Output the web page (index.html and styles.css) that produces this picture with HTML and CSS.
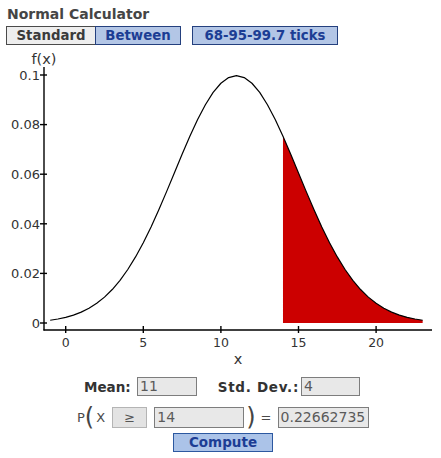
FILE: index.html
```html
<!DOCTYPE html>
<html>
<head>
<meta charset="utf-8">
<link rel="stylesheet" href="styles.css">
</head>
<body>
<div class="app">
  <div class="title">Normal Calculator</div>
  <div class="modes">
    <button class="mode mode-std">Standard</button><button class="mode mode-sel mode-between">Between</button><button class="mode mode-sel mode-ticks">68-95-99.7 ticks</button>
  </div>
  <svg class="chart" width="441" height="323" viewBox="0 45 441 323" xmlns="http://www.w3.org/2000/svg">
    <polygon class="area" points="282.98,323 282.98,136.29 290.74,154.31 298.50,172.97 306.26,191.63 314.02,209.75 321.78,226.89 329.54,242.70 337.30,256.94 345.06,269.51 352.82,280.35 360.58,289.52 368.34,297.13 376.10,303.32 383.86,308.26 391.62,312.13 399.38,315.11 407.14,317.36 414.90,319.03 422.66,320.25 422.66,323"/>
    <polyline class="curve" points="50.18,320.25 57.94,319.03 65.70,317.36 73.46,315.11 81.22,312.13 88.98,308.26 96.74,303.32 104.50,297.13 112.26,289.52 120.02,280.35 127.78,269.51 135.54,256.94 143.30,242.70 151.06,226.89 158.82,209.75 166.58,191.63 174.34,172.97 182.10,154.31 189.86,136.29 197.62,119.53 205.38,104.71 213.14,92.44 220.90,83.26 228.66,77.57 236.42,75.65 244.18,77.57 251.94,83.26 259.70,92.44 267.46,104.71 275.22,119.53 282.98,136.29 290.74,154.31 298.50,172.97 306.26,191.63 314.02,209.75 321.78,226.89 329.54,242.70 337.30,256.94 345.06,269.51 352.82,280.35 360.58,289.52 368.34,297.13 376.10,303.32 383.86,308.26 391.62,312.13 399.38,315.11 407.14,317.36 414.90,319.03 422.66,320.25"/>
    <g class="axis">
      <line x1="44" y1="67" x2="44" y2="330.5"/>
      <line x1="43.5" y1="330" x2="432" y2="330"/>
      <line x1="40" y1="323" x2="47" y2="323"/>
      <line x1="40" y1="273.4" x2="47" y2="273.4"/>
      <line x1="40" y1="223.8" x2="47" y2="223.8"/>
      <line x1="40" y1="174.2" x2="47" y2="174.2"/>
      <line x1="40" y1="124.6" x2="47" y2="124.6"/>
      <line x1="40" y1="75" x2="47" y2="75"/>
      <line x1="65.7" y1="326" x2="65.7" y2="333"/>
      <line x1="143.3" y1="326" x2="143.3" y2="333"/>
      <line x1="220.9" y1="326" x2="220.9" y2="333"/>
      <line x1="298.5" y1="326" x2="298.5" y2="333"/>
      <line x1="376.1" y1="326" x2="376.1" y2="333"/>
    </g>
    <g class="ylabels">
      <text x="40" y="327.8">0</text>
      <text x="40" y="278.2">0.02</text>
      <text x="40" y="228.6">0.04</text>
      <text x="40" y="179">0.06</text>
      <text x="40" y="129.4">0.08</text>
      <text x="40" y="79.8">0.1</text>
    </g>
    <g class="xlabels">
      <text x="65.7" y="347">0</text>
      <text x="143.3" y="347">5</text>
      <text x="220.9" y="347">10</text>
      <text x="298.5" y="347">15</text>
      <text x="376.1" y="347">20</text>
    </g>
    <text class="axis-title" x="238" y="364">x</text>
    <text class="axis-title" x="44" y="64">f(x)</text>
  </svg>
  <div class="row row-params">
    <span class="lbl lbl-mean">Mean:</span><span class="field field-mean">11</span><span class="lbl lbl-sd">Std. Dev.:</span><span class="field field-sd">4</span>
  </div>
  <div class="row row-prob">
    <span class="pt">P</span><span class="paren">(</span><span class="pt px">X</span><button class="op">≥</button><span class="field field-x">14</span><span class="paren paren-r">)</span><span class="pt eq">=</span><span class="field field-res">0.22662735</span>
  </div>
  <div class="row row-compute">
    <button class="compute">Compute</button>
  </div>
</div>
</body>
</html>
```
FILE: styles.css
```css
html, body {
  margin: 0;
  padding: 0;
  background: #ffffff;
}
body {
  font-family: "DejaVu Sans", Verdana, sans-serif;
  color: #333333;
}
.app {
  width: 441px;
  height: 458px;
  overflow: hidden;
}
.title {
  margin: 6px 0 0 7px;
  font-size: 14px;
  line-height: 16px;
  font-weight: bold;
  color: #454545;
}
.modes {
  display: flex;
  margin: 4px 0 0 6px;
  height: 19px;
}
.mode {
  box-sizing: border-box;
  height: 19px;
  margin: 0;
  padding: 0;
  font-family: "DejaVu Sans", Verdana, sans-serif;
  font-size: 13.3px;
  line-height: 17px;
  font-weight: bold;
  text-align: center;
  border: 1px solid #4a4a4a;
  border-radius: 0;
}
.mode-std {
  width: 89px;
  background: #eeeeee;
  color: #3a3a3a;
  border-right: none;
}
.mode-sel {
  background: #b3c6e6;
  color: #1c3d94;
  border-color: #24407e;
}
.mode-between {
  width: 86px;
}
.mode-ticks {
  width: 146px;
  margin-left: 11px;
}
.chart {
  display: block;
}
.area {
  fill: #cc0000;
  stroke: none;
}
.curve {
  fill: none;
  stroke: #000000;
  stroke-width: 1.2;
  stroke-linejoin: round;
}
.axis line {
  stroke: #000000;
  stroke-width: 1.4;
}
.ylabels text {
  font-family: "DejaVu Sans", Verdana, sans-serif;
  font-size: 13px;
  fill: #333333;
  text-anchor: end;
}
.xlabels text {
  font-family: "DejaVu Sans", Verdana, sans-serif;
  font-size: 12.5px;
  fill: #333333;
  text-anchor: middle;
}
.axis-title {
  font-family: "DejaVu Sans", Verdana, sans-serif;
  font-size: 14.5px;
  fill: #333333;
  text-anchor: middle;
}
.row {
  display: flex;
  align-items: center;
}
.row-params {
  margin-top: 9px;
  height: 19px;
  padding-left: 84px;
}
.lbl {
  font-size: 13.5px;
  font-weight: bold;
  color: #333333;
}
.lbl-mean {
  width: 47px;
}
.lbl-sd {
  width: 102px;
  text-align: right;
  letter-spacing: 0.7px;
}
.field {
  box-sizing: border-box;
  height: 19px;
  background: #e8e8e8;
  border: 1px solid #7d7d7d;
  color: #5a5a5a;
  font-size: 14px;
  line-height: 17px;
  padding-left: 2px;
  white-space: nowrap;
  overflow: hidden;
}
.field-mean {
  width: 60px;
  margin-left: 6px;
}
.field-sd {
  width: 59px;
  margin-left: 2px;
}
.row-prob {
  margin-top: 11px;
  height: 21px;
  padding-left: 77px;
}
.pt {
  font-size: 13px;
  color: #4a4a4a;
}
.paren {
  font-size: 24px;
  line-height: 21px;
  color: #444444;
}
.px {
  margin-left: 2px;
  width: 16px;
}
.op {
  box-sizing: border-box;
  width: 35px;
  height: 21px;
  margin: 0;
  padding: 0;
  background: #e3e3e3;
  border: 1px solid #b4b4b4;
  border-radius: 0;
  color: #555555;
  font-family: "DejaVu Sans", Verdana, sans-serif;
  font-size: 13px;
  text-align: center;
}
.field-x {
  width: 90px;
  height: 21px;
  line-height: 19px;
  margin-left: 7px;
}
.paren-r {
  margin-left: 2px;
}
.eq {
  margin-left: 5px;
  width: 17px;
}
.field-res {
  width: 91px;
  height: 21px;
  line-height: 19px;
  padding-left: 2px;
}
.row-compute {
  margin-top: 5px;
  padding-left: 173px;
}
.compute {
  box-sizing: border-box;
  width: 100px;
  height: 19px;
  margin: 0;
  padding: 0;
  background: #abc3e8;
  border: 1px solid #2c58a0;
  border-radius: 0;
  color: #1c3d94;
  font-family: "DejaVu Sans", Verdana, sans-serif;
  font-size: 13.5px;
  line-height: 17px;
  font-weight: bold;
  text-align: center;
}
```
